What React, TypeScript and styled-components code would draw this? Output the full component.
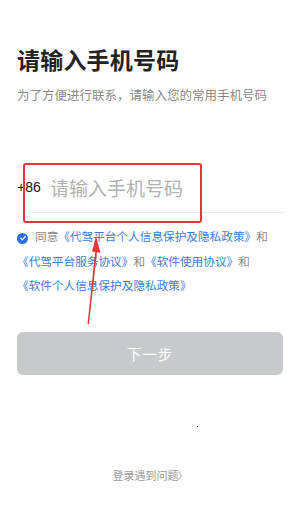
import React from "react";
import styled, { createGlobalStyle } from "styled-components";

const GlobalStyle = createGlobalStyle`
  html, body {
    margin: 0;
    padding: 0;
    background: #ffffff;
  }
  body {
    font-family: "Noto Sans CJK SC", "Noto Sans", sans-serif;
  }
`;

const App = (): JSX.Element => {
  return (
    <Page>
      <GlobalStyle />
      <Title>请输入手机号码</Title>
      <SubTitle>为了方便进行联系，请输入您的常用手机号码</SubTitle>

      <PhoneRow>
        <Prefix>+86</Prefix>
        <PhoneInput placeholder="请输入手机号码" />
      </PhoneRow>

      <Agreement>
        <Check>
          <svg width="8" height="8" viewBox="0 0 10 10">
            <path
              d="M2 5.2 L4.2 7.3 L8 3"
              fill="none"
              stroke="#fff"
              strokeWidth="1.6"
              strokeLinecap="round"
              strokeLinejoin="round"
            />
          </svg>
        </Check>
        同意<Link>《代驾平台个人信息保护及隐私政策》</Link>和
        <Link>《代驾平台服务协议》</Link>和<Link>《软件使用协议》</Link>和
        <Link>《软件个人信息保护及隐私政策》</Link>
      </Agreement>

      <NextButton>下一步</NextButton>

      <Help>
        登录遇到问题<Chevron>〉</Chevron>
      </Help>

      <Highlight />
      <Arrow width="30" height="90" viewBox="0 0 30 90">
        <polygon points="5.5,88 7,88 15,16 18.5,17 14,0 10,15.5 13.2,15.9" fill="#e8353a" />
      </Arrow>
      <Speck />
    </Page>
  );
};

const Page = styled.div`
  position: relative;
  width: 300px;
  height: 515px;
  box-sizing: border-box;
  padding: 42px 17px 0;
  overflow: hidden;
`;

const Title = styled.h1`
  margin: 0;
  font-size: 23px;
  line-height: 34px;
  font-weight: 600;
  color: #222222;
  letter-spacing: 0.2px;
`;

const SubTitle = styled.p`
  margin: 10px 0 0;
  font-size: 12.5px;
  line-height: 18px;
  color: #8a8a8a;
`;

const PhoneRow = styled.div`
  position: relative;
  display: flex;
  align-items: center;
  height: 52px;
  margin-top: 57px;
  &::after {
    content: "";
    position: absolute;
    left: 11px;
    right: -1px;
    bottom: 0;
    height: 1px;
    background: #ececec;
  }
`;

const Prefix = styled.span`
  font-family: "Liberation Sans", Arial, sans-serif;
  font-size: 14px;
  color: #111111;
  width: 33px;
`;

const PhoneInput = styled.input`
  flex: 1;
  min-width: 0;
  border: none;
  outline: none;
  padding: 0;
  background: transparent;
  font-family: "Noto Sans CJK SC", sans-serif;
  font-size: 19px;
  color: #222;
  &::placeholder {
    color: #b2b2b2;
  }
`;

const Agreement = styled.p`
  margin: 11px 0 0;
  font-size: 11.65px;
  line-height: 24.5px;
  color: #8a8a8a;
`;

const Check = styled.span`
  display: inline-flex;
  align-items: center;
  justify-content: center;
  width: 11px;
  height: 11px;
  border-radius: 50%;
  background: #2a6fe6;
  margin-right: 7px;
  vertical-align: -1px;
`;

const Link = styled.span`
  color: #3b7de3;
  white-space: nowrap;
`;

const NextButton = styled.button`
  display: block;
  width: 100%;
  height: 43px;
  margin-top: 34px;
  border: none;
  border-radius: 6px;
  background: #c8c9cc;
  color: #ffffff;
  font-family: "Noto Sans CJK SC", sans-serif;
  font-size: 14.5px;
  letter-spacing: 1px;
`;

const Help = styled.div`
  margin-top: 92px;
  text-align: center;
  font-size: 11px;
  line-height: 16px;
  color: #9a9a9a;
`;

const Chevron = styled.span`
  font-size: 10px;
  margin-left: -1px;
`;

const Highlight = styled.div`
  position: absolute;
  left: 23px;
  top: 163px;
  width: 179px;
  height: 60px;
  box-sizing: border-box;
  border: 2px solid #e8353a;
  border-radius: 3px;
`;

const Arrow = styled.svg`
  position: absolute;
  left: 82px;
  top: 236px;
`;

const Speck = styled.span`
  position: absolute;
  left: 197px;
  top: 426px;
  width: 1px;
  height: 1px;
  background: #333;
`;

export default App;
